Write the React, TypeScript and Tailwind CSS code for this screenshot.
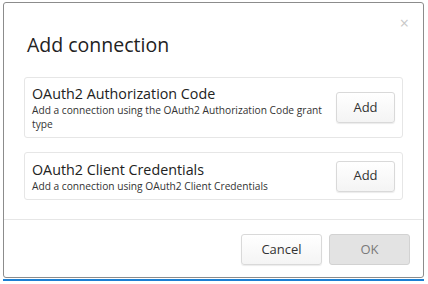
import React from "react";

function Btn({ children, disabled, className }: { children: React.ReactNode; disabled?: boolean; className?: string }) {
  return (
    <button
      className={
        "flex items-center justify-center rounded-[3px] border text-[13px] " +
        (disabled
          ? "border-[#d2d2d2] bg-[#e3e3e3] text-[#7a7a7a]"
          : "border-[#d9d9d9] bg-gradient-to-b from-white to-[#f4f4f4] text-[#333] shadow-[0_1px_1px_rgba(0,0,0,0.08)]") +
        " " +
        (className ?? "")
      }
    >
      {children}
    </button>
  );
}

export default function App() {
  return (
    <div
      className="relative h-[284px] w-[428px] overflow-hidden bg-white"
      style={{ fontFamily: '"Open Sans", "Noto Sans", sans-serif' }}
    >
      <div className="ml-[3px] mt-[2px] flex h-[276px] w-[421px] flex-col rounded-[3px] border border-[#8c8c8c] bg-white">
        <div className="relative">
          <span className="absolute right-[14px] top-[12px] text-[16px] leading-none text-[#c8c8c8]">×</span>
          <h1 className="pl-[23px] pt-[28px] text-[19.5px] leading-[28px] text-[#222]">Add connection</h1>
        </div>
        <div className="mx-[20px] mt-[18px] flex h-[61px] items-center justify-between rounded-[3px] border border-[#e6e6e6] pl-[7px] pr-[7px]">
          <div className="w-[296px]">
            <div className="text-[14.3px] leading-[19px] text-[#222]">OAuth2 Authorization Code</div>
            <div className="text-[10.2px] leading-[14px] text-[#333]">
              Add a connection using the OAuth2 Authorization Code grant type
            </div>
          </div>
          <Btn className="h-[31px] w-[59px]">Add</Btn>
        </div>
        <div className="mx-[20px] mt-[14px] flex h-[48px] items-center justify-between rounded-[3px] border border-[#e6e6e6] pl-[7px] pr-[7px]">
          <div>
            <div className="text-[14.3px] leading-[19px] text-[#222]">OAuth2 Client Credentials</div>
            <div className="text-[10.2px] leading-[14px] text-[#333]">Add a connection using OAuth2 Client Credentials</div>
          </div>
          <Btn className="h-[31px] w-[59px]">Add</Btn>
        </div>
        <div className="mt-[19px] h-[1px] bg-[#e6e6e6]" />
        <div className="flex justify-end gap-[7px] pr-[13px] pt-[14px]">
          <Btn className="h-[31px] w-[81px]">Cancel</Btn>
          <Btn disabled className="h-[31px] w-[81px]">OK</Btn>
        </div>
      </div>
      <div className="ml-[3px] mt-[1px] h-[2px] w-[421px] bg-[#1b7fd3]" />
    </div>
  );
}
